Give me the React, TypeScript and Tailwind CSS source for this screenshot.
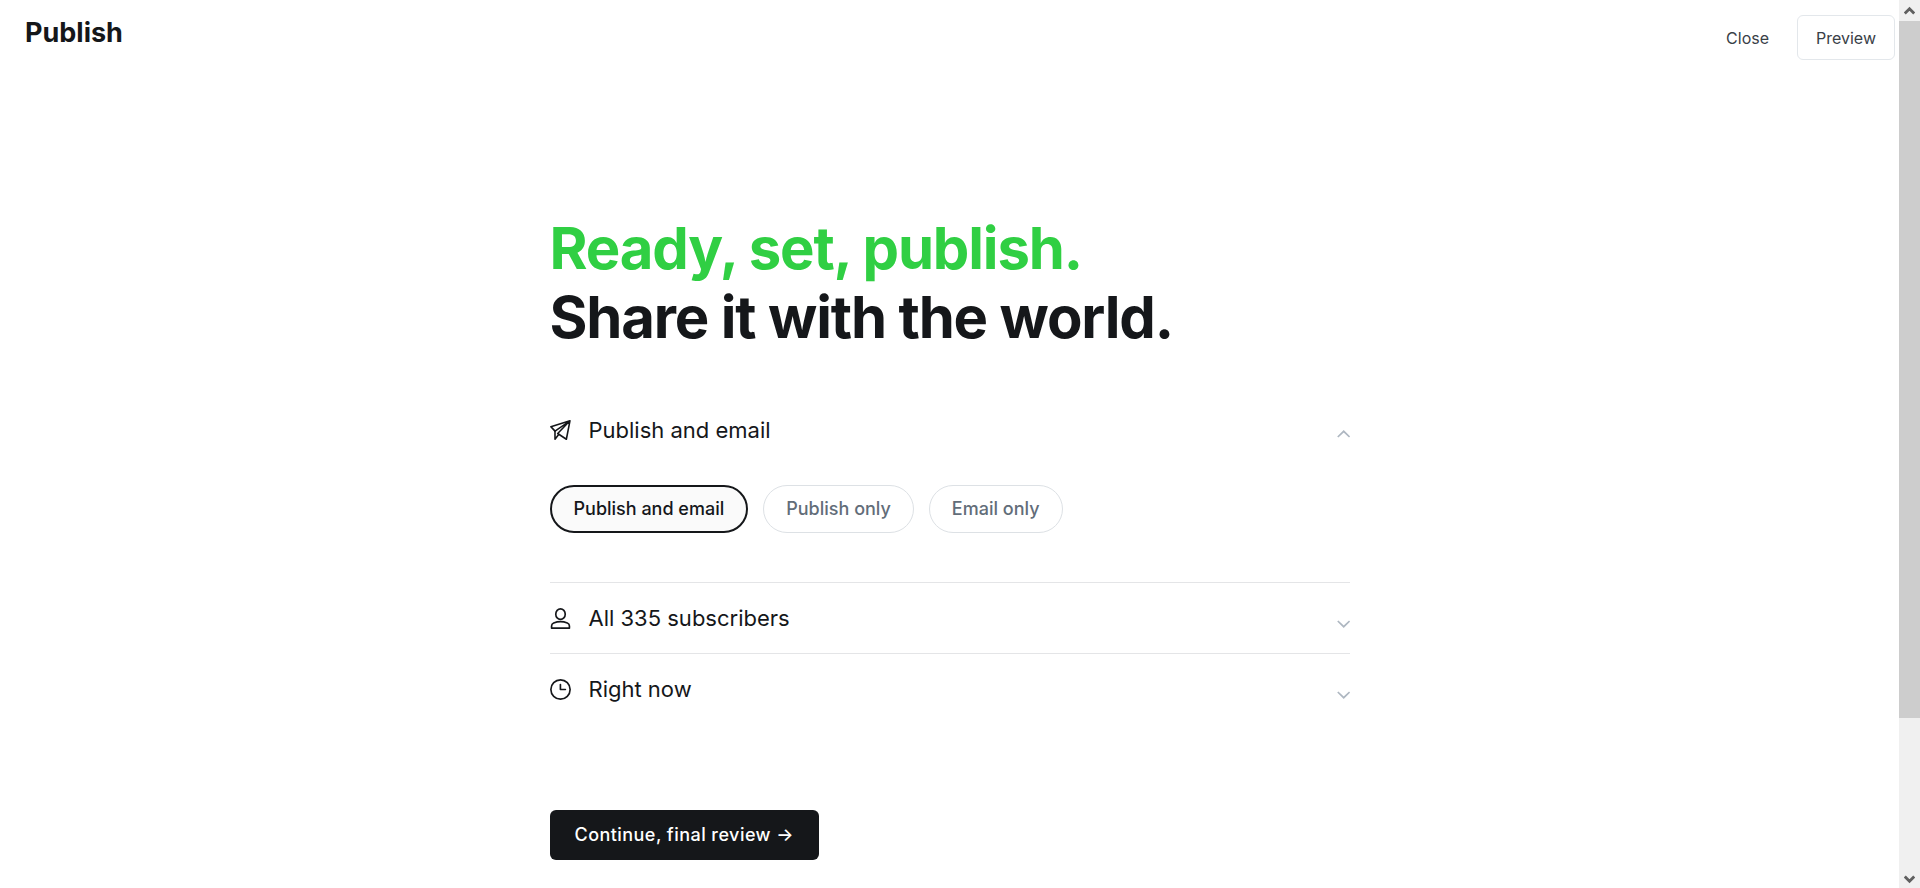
import React, { useState } from "react";

const publishTypes = ["Publish and email", "Publish only", "Email only"];

const SendIcon = () => (
  <svg viewBox="0 0 24 24" className="h-[21px] w-[21px] shrink-0" fill="none" stroke="currentColor" strokeWidth="1.8" strokeLinecap="round" strokeLinejoin="round">
    <path d="M22.8.9 1 7.600l4.700 5.100L22.800.9 18.700 22l-9.900-6.600L22.800.9Z" />
    <path d="M5.700 12.700V22l4.200-5.500" />
  </svg>
);

const MemberIcon = () => (
  <svg viewBox="0 0 24 24" className="h-[21px] w-[21px] shrink-0" fill="none" stroke="currentColor" strokeWidth="1.9" strokeLinejoin="round">
    <ellipse cx="12" cy="7" rx="5.4" ry="6" />
    <path d="M1.800 23v-2.500c0-1.600.9-2.700 2.400-3.300 4.800-1.900 10.800-1.900 15.600 0 1.500.6 2.400 1.700 2.400 3.300V23Z" />
  </svg>
);

const ClockIcon = () => (
  <svg viewBox="0 0 24 24" className="h-[21px] w-[21px] shrink-0" fill="none" stroke="currentColor" strokeWidth="1.9" strokeLinecap="round" strokeLinejoin="round">
    <circle cx="12" cy="12" r="11" />
    <path d="M11.900 6.300v5.700h5.700" />
  </svg>
);

const Chevron = ({ up }: { up?: boolean }) => (
  <svg
    viewBox="0 0 13 8"
    className={up ? "mt-2 h-2 w-[13px] shrink-0 text-[#aeb7c1]" : "mt-3 h-2 w-[13px] shrink-0 text-[#aeb7c1]"}
    fill="none"
    stroke="currentColor"
    strokeWidth="1.700"
  >
    <path d={up ? "M.8 7 6.700 1.300l5.900 5.700" : "M.8 1l5.900 5.700L12.600 1"} />
  </svg>
);

type SettingProps = {
  icon: React.ReactNode;
  title: string;
  open?: boolean;
  onClick?: () => void;
};

const SettingTitle = ({ icon, title, open, onClick }: SettingProps) => (
  <button
    type="button"
    aria-expanded={!!open}
    onClick={onClick}
    className="flex h-[70px] w-full items-center text-left text-[22px] text-[#15171a]"
  >
    {icon}
    <span className="ml-[18px] flex-1 pt-px">{title}</span>
    <Chevron up={open} />
  </button>
);

const ScrollArrow = ({ down }: { down?: boolean }) => (
  <svg viewBox="0 0 11 9" className="h-[9px] w-[11px] text-[#606060]" fill="none" stroke="currentColor" strokeWidth="2.800">
    <path d={down ? "M.8 1.500 5.500 6.200l4.700-4.700" : "M.8 7.500 5.500 2.800l4.700 4.700"} />
  </svg>
);

const App = () => {
  const [type, setType] = useState(publishTypes[0]);
  const [open, setOpen] = useState(true);

  return (
    <div className="flex h-screen bg-white font-['Inter',sans-serif] text-[#15171a]">
      <div className="flex-1 overflow-hidden">
        <header className="flex h-[75px] items-center justify-between pr-1 pl-[25px]">
          <h2 className="pb-2 text-[27px] font-bold">Publish</h2>
          <div className="flex items-center gap-7 text-base text-[#394047]">
            <button type="button">Close</button>
            <button type="button" className="h-[45px] rounded-md border border-[#e3e7eb] px-[18px]">
              Preview
            </button>
          </div>
        </header>
        <main className="mx-auto w-full max-w-[800px] pt-[139px]">
          <h1 className="text-[58px] leading-[69px] font-bold tracking-[-0.02em]">
            <span className="block text-[#30cf43]">Ready, set, publish.</span>
            <span className="block">Share it with the world.</span>
          </h1>
          <div className="mt-[43px] divide-y divide-[#e4e5e7]">
            <section>
              <SettingTitle icon={<SendIcon />} title="Publish and email" open={open} onClick={() => setOpen(!open)} />
              {open && (
                <fieldset className="flex gap-[15px] pt-5 pb-[49px]">
                  {publishTypes.map((item) => (
                    <label
                      key={item}
                      className={
                        item === type
                          ? "flex h-12 items-center rounded-full border-2 border-[#15171a] bg-[#fafafa] px-[22px] text-lg font-medium"
                          : "flex h-12 items-center rounded-full border border-[#dde1e5] px-[22px] text-lg font-medium text-[#626d79]"
                      }
                    >
                      <input
                        type="radio"
                        name="publish-type"
                        className="sr-only"
                        checked={item === type}
                        onChange={() => setType(item)}
                      />
                      {item}
                    </label>
                  ))}
                </fieldset>
              )}
            </section>
            <section>
              <SettingTitle icon={<MemberIcon />} title="All 335 subscribers" />
            </section>
            <section>
              <SettingTitle icon={<ClockIcon />} title="Right now" />
            </section>
          </div>
          <button type="button" className="mt-[86px] h-[50px] rounded-md bg-[#15171a] px-[25px] text-lg font-medium tracking-wide text-white">
            Continue, final review →
          </button>
        </main>
      </div>
      <div className="flex w-[21px] flex-col items-center bg-[#f0f0f0] pt-1.5 pb-1">
        <ScrollArrow />
        <div className="mt-1.5 mb-1 w-full flex-1">
          <div className="h-[82%] bg-[#cdcdcd]" />
        </div>
        <ScrollArrow down />
      </div>
    </div>
  );
};

export default App;
